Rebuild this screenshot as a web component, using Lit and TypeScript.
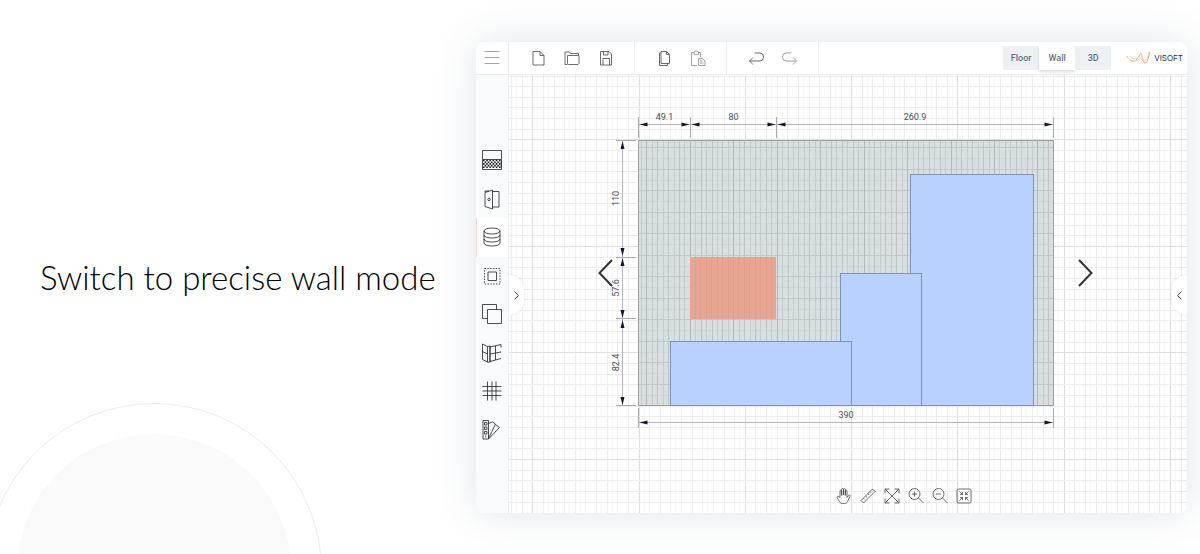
import { LitElement, html, svg, css, TemplateResult, SVGTemplateResult } from "lit";
import { customElement, property, state } from "lit/decorators.js";
import { classMap } from "lit/directives/class-map.js";

const range = (n: number) => Array.from({ length: n }, (_, i) => i);

/* All icons are drawn around the centre of a 22 x 22 box. */
const icons: Record<string, SVGTemplateResult> = {
  menu: svg`<path stroke="#8d8d8d" d="M3.5 4.5h15M3.5 10.5h15M3.5 16.5h15"/>`,
  file: svg`<path d="M6 4.500h7l4 4v9.500h-11zM13 4.500v4h4"/>`,
  folder: svg`<path d="M6.500 17.500h-2.500v-12.500h4.500l1 1.500h8v1.500M6.500 16.500v-8h11.500v8l-1 1h-9.500z"/>`,
  save: svg`<path d="M5.500 4.500h8.500l2.500 2.500v11h-11zM8.500 4.500v3.500h4.500v-3.500M8 18v-6.500h6.500v6.500"/>`,
  copy: svg`<path d="M8 4.500h5.500l3 3v9h-8.500zM13.500 4.500v3h3M8 6h-1.500v12.500h8v-2"/>`,
  paste: svg`<path d="M10 18.500h-5.500v-13h2.500M11 5.500h2.500v4.500M7 7.500v-2l1-1.500h2.500l1 1.500v2zM11.500 11.500h4l2.500 2.500v4.500h-6.500zM13 14h2.500M13 16h3.500" />`,
  undo: svg`<path d="M9.500 6h5.500a3.500 4 0 0 1 0 8h-10.500M8 10.500l-3.500 3.500 3.500 3.500"/>`,
  redo: svg`<path d="M12.500 6h-5.500a3.500 4 0 0 0 0 8h10.500M14 10.500l3.500 3.500-3.500 3.500"/>`,
  tiles: svg`<path d="M1.500 1.500h19v19h-19z"/><path stroke-width="1.600" stroke-dasharray="1.600 1.600" d="M2 11.500h18M3.600 13.200h17M2 14.900h18M3.600 16.600h17M2 18.300h18"/><path d="M2 10.500h18"/>`,
  door: svg`<path d="M4 4.500l7.500-2.500v19l-7.500-2.500zM11.500 3.500h6.500v15.500h-6.500M4 4v-1h4"/><circle cx="8" cy="11.500" r="1.200"/>`,
  stack: svg`<ellipse cx="11" cy="5" rx="8" ry="3"/><path d="M3 5v12c0 4 16 4 16 0v-12M3 9c0 4 16 4 16 0M3 13c0 4 16 4 16 0"/>`,
  frame: svg`<path stroke-dasharray="1.500 1.300" d="M3.500 3.500h15.500v15.500h-15.500z"/><path d="M7 7h8.500v8.500h-8.500z"/>`,
  overlap: svg`<path d="M6.500 15.500h-5v-14h14v5M6.500 6.500h14v14h-14z"/>`,
  wall: svg`<path d="M1.500 2l5 2.500v15.500l-5-2.500zM6.500 4.500l2.500 -.5v16l-2.500 .5M9 5l11-2.500M9 12l11-2M9 19.500l11-3M14.500 4v14M20 2.500v3M1.500 9.500l5 2.500M9 4v16"/>`,
  hash: svg`<path d="M6.500 1.500v19M11 1.500v19M15 1.500v19M1.500 6.500h19M1.500 11h19M1.500 15.500h19"/>`,
  swatches: svg`<path d="M2 1.500h5.500v18.500h-5.500zM3.500 3.500h2.500v2.500h-2.500zM3.500 8h2.500v2.500h-2.500zM3.500 12.500h2.500v2.500h-2.500zM7.500 4.500l4-1.500 3 2-7 14.500M14.500 5.500l4 3-11 11.500M4.700 16.500v2"/>`,
  hand: svg`<path d="M7 12.500v-6.500c0-1.300 1.700-1.300 1.700 0v4.500v-6c0-1.300 1.800-1.300 1.800 0v5.500v-5.500c0-1.300 1.800-1.300 1.800 0v6v-4.500c0-1.300 1.700-1.300 1.700 0v6.500l1.500-2c.8-1 2-.3 1.500.8l-2.500 5.200c-.7 1.500-1.500 2-3 2h-2c-1.500 0-2.300-.5-3-1.800l-2.300-4c-.6-1.200.6-2 1.500-1.200z"/>`,
  ruler: svg`<path d="M4 15.500l11.500-11.500 2.500 2.500-11.500 11.500zM6.500 13.200l1.200 1.200M8.700 11l1.200 1.200M10.900 8.800l1.200 1.200M13.100 6.600l1.200 1.200"/>`,
  expand: svg`<path d="M4 4l14 14M18 4l-14 14M8.500 4h-4.500v4.500M13.500 4h4.500v4.500M8.500 18h-4.500v-4.500M13.500 18h4.500v-4.500"/>`,
  zoomIn: svg`<circle cx="9.500" cy="9" r="5.500"/><path d="M13.500 13l5 5M7 9h5M9.500 6.500v5"/>`,
  zoomOut: svg`<circle cx="9.500" cy="9" r="5.500"/><path d="M13.500 13l5 5M7 9h5"/>`,
  fit: svg`<rect x="4" y="4" width="14" height="14" rx="1.500"/><path d="M6.500 6.500l3 3v-2.500M9.500 9.500h-2.500M15.500 6.500l-3 3v-2.500M12.500 9.500h2.500M6.500 15.500l3-3v2.500M9.500 12.500h-2.500M15.500 15.500l-3-3v2.500M12.500 12.500h2.500"/>`,
};

@customElement("line-icon")
class LineIcon extends LitElement {
  static styles = css`
    :host { display: block; width: 22px; height: 22px; }
    .glyph {
      display: block; width: 22px; height: 22px; fill: none;
      stroke: currentColor; stroke-width: 0.8; stroke-linejoin: round;
    }
  `;
  @property() name = "file";
  render() {
    return html`<svg class="glyph" viewBox="0 0 22 22" aria-hidden="true">${icons[this.name]}</svg>`;
  }
}

/* The wall elevation: 390 x 250 cm, drawn over a 10 cm grid. */
@customElement("wall-plan")
class WallPlan extends LitElement {
  static styles = css`
    :host { display: block; min-height: 0; }
    .plan { display: block; width: 100%; height: 100%; }
    .label { font: 9px Roboto, "Liberation Sans", sans-serif; fill: #4a4f60; text-anchor: middle; }
    .dim { stroke: #b4b6be; fill: none; }
    .tick { stroke: #a9abb0; fill: none; }
    .tip { fill: #14142c; }
    .block { fill: #b8d1ff; stroke: #7f92b5; }
    .opening { fill: #e7a592; }
    .outline { fill: none; stroke: #9aa1a4; }
  `;

  private horizontal(x1: number, x2: number, y: number, text: string) {
    const m = (x1 + x2) / 2;
    return svg`
      <path class="dim" d="M${x1} ${y}H${x2}"/>
      <path class="tip" d="M${x1 + 1} ${y}l8 -2v4zM${x2 - 1} ${y}l-8 -2v4z"/>
      <text class="label" x=${m} y=${y - 5}>${text}</text>`;
  }

  private vertical(y1: number, y2: number, x: number, text: string) {
    const m = (y1 + y2) / 2;
    return svg`
      <path class="dim" d="M${x} ${y1}V${y2}"/>
      <path class="tip" d="M${x} ${y1 + 1}l-2 8h4zM${x} ${y2 - 1}l-2 -8h4z"/>
      <text class="label" transform="translate(${x - 4} ${m}) rotate(-90)">${text}</text>`;
  }

  render() {
    return html`
      <svg class="plan" viewBox="509 75 678 438" preserveAspectRatio="xMidYMid slice" role="img" aria-label="Wall elevation">
        <rect x="0" y="0" width="1800" height="900" fill="#fff"/>
        ${range(64).map((i) => svg`<path stroke="#f9f9f9" d="M${Math.round(516 + i * 10.63)}.5 75V513"/>`)}
        ${range(64).map((i) => svg`<path stroke=${i % 10 === 2 ? "#dedede" : "#eeeeee"} d="M${Math.round(511 + i * 10.63)}.5 75V513"/>`)}
        ${range(41).map((i) => svg`<path stroke=${i % 10 === 6 ? "#dedede" : "#ececec"} d="M509 ${Math.round(75.5 + (i + 0) * 10.65)}.5H1187"/>`)}

        <rect x="638" y="140" width="416" height="266" fill="#d7dfe1"/>
        ${range(12).map((i) => svg`<path stroke="#c0c8ca" d="M638 ${Math.round(147 + i * 21.5)}.5H1054"/>`)}
        ${range(12).map((i) => svg`<path stroke="#cfd7d9" d="M638 ${Math.round(158 + i * 21.5)}.5H1054"/>`)}
        ${range(76).map((i) => svg`<path stroke=${i % 8 === 1 ? "#b2babc" : i % 2 ? "#bcc4c6" : "#c3cbcd"} d="M${Math.round(641 + i * 5.43)}.5 140V406"/>`)}
        <path class="outline" d="M638.5 140.5h415v265h-415z"/>

        <rect class="opening" x="690" y="257" width="86" height="62"/>
        ${range(15).map((i) => svg`<path stroke="#d99886" stroke-opacity=".5" d="M${Math.round(695 + i * 5.43)}.5 257V319"/>`)}
        <rect class="block" x="910.5" y="174.5" width="123" height="231"/>
        <rect class="block" x="840.5" y="273.5" width="81" height="132"/>
        <rect class="block" x="670.5" y="341.5" width="181" height="64"/>

        <path class="tick" d="M638.5 117v21M690.5 117v21M776.5 117v21M1053.5 117v21M638.5 408v20M1053.5 408v20"/>
        <path class="tick" d="M616 140.5h20M616 257.5h20M616 318.5h20M616 405.5h20"/>
        ${this.horizontal(638.5, 690.5, 124.5, "49.1")}
        ${this.horizontal(690.5, 776.5, 124.5, "80")}
        ${this.horizontal(776.5, 1053.5, 124.5, "260.9")}
        ${this.horizontal(638.5, 1053.5, 422.5, "390")}
        ${this.vertical(140, 257, 622.5, "110")}
        ${this.vertical(257, 319, 622.5, "57.6")}
        ${this.vertical(319, 406, 622.5, "82.4")}
      </svg>`;
  }
}

const button = css`
  button {
    display: grid; place-items: center; margin: 0; padding: 0; border: 0;
    background: none; color: #484848; font: 9px Roboto, "Liberation Sans", sans-serif; cursor: pointer;
  }
`;

@customElement("app-root")
class AppRoot extends LitElement {
  static styles = [
    button,
    css`
      :host { display: block; }
      .page {
        display: grid; grid-template-columns: minmax(0, 476fr) minmax(0, 711fr); min-height: 100vh;
        box-sizing: border-box; padding-right: 13px; background: #fff; overflow: hidden;
        font-family: Roboto, "Liberation Sans", sans-serif;
      }
      .intro { position: relative; display: grid; align-items: center; padding-left: 40px; }
      .headline { margin: 0; font: 300 33px/40px Lato, "Open Sans", sans-serif; color: #000; white-space: nowrap; z-index: 1; }
      .halo {
        position: absolute; left: -14px; top: calc(100% - 151px); width: 334px; height: 334px;
        display: grid; place-items: center; border: 1px solid #ececec; border-radius: 50%;
      }
      .disc { width: 274px; height: 274px; border-radius: 50%; background: #fafafa; }

      .window {
        display: grid; grid-template-rows: 33px minmax(0, 1fr); margin: 42px 0 41px;
        border-radius: 8px; background: #fff; box-shadow: 0 0 40px rgba(70, 90, 110, 0.16); z-index: 1; min-height: 0;
      }
      .bar { display: flex; border-bottom: 1px solid #ececec; }
      .menu { width: 33px; border-right: 1px solid #ececec; }
      .group { display: flex; padding: 0 11px 0 12px; border-right: 1px solid #f0f0f0; }
      .tool { width: 34px; }
      .faded { color: #8a8a8a; }
      .modes { display: flex; margin: 4px 15px 4px auto; }
      .mode { width: 36px; background: #edf1f3; color: #647080; font-weight: 500; }
      .active { background: #fff; box-shadow: 0 2px 3px rgba(60, 80, 100, 0.2); }
      .brand { display: flex; align-items: center; gap: 2px; margin-right: 4px; font: 8px Inter, "Open Sans", sans-serif; color: #333; text-decoration: none; }
      .mark { width: 26px; height: 16px; fill: none; }

      .body { display: grid; grid-template-columns: 33px minmax(0, 1fr); min-height: 0; }
      .side {
        display: grid; grid-auto-rows: 1fr; padding: 66px 0 64px; background: #f8fafc;
        border-right: 1px solid #eceef1; border-radius: 0 0 0 8px;
      }
      .item { color: #222; border-left: 1px solid transparent; padding-right: 1px; }
      .chosen { background: #fff; border-left-color: #f6d5d0; }

      .canvas { position: relative; display: grid; grid-template-rows: minmax(0, 1fr); min-height: 0; overflow: hidden; border-radius: 0 0 8px 0; }
      .arrow { position: absolute; top: 184px; width: 15px; height: 28px; color: #333; }
      .prev { left: 89px; }
      .next { right: 94px; }
      .drawer { position: absolute; top: 200px; width: 15px; height: 40px; background: #fff; box-shadow: 0 0 3px rgba(60, 80, 100, 0.14); }
      .open-left { left: 0; border-radius: 0 20px 20px 0; }
      .open-right { right: 0; border-radius: 20px 0 0 20px; }
      .stroke { display: block; fill: none; stroke: currentColor; }
      .view { position: absolute; left: 47.6%; bottom: 6px; display: flex; }
      .view-tool { width: 24px; height: 22px; }
    `,
  ];

  @state() private mode = "Wall";
  @state() private item = "stack";

  private tool(name: string, label: string, faded = false): TemplateResult {
    return html`<button class=${classMap({ tool: true, faded })} aria-label=${label}><line-icon name=${name}></line-icon></button>`;
  }

  render() {
    const side = [
      ["tiles", "Tiles"], ["door", "Doors"], ["stack", "Library"], ["frame", "Select"],
      ["overlap", "Areas"], ["wall", "Walls"], ["hash", "Grid"], ["swatches", "Colours"],
    ];
    const view = [
      ["hand", "Pan"], ["ruler", "Measure"], ["expand", "Extents"],
      ["zoomIn", "Zoom in"], ["zoomOut", "Zoom out"], ["fit", "Fit"],
    ];
    return html`
      <main class="page">
        <section class="intro">
          <div class="halo"><div class="disc"></div></div>
          <h1 class="headline">Switch to precise wall mode</h1>
        </section>
        <section class="window">
          <header class="bar">
            <button class="menu" aria-label="Menu"><line-icon name="menu"></line-icon></button>
            <div class="group">
              ${this.tool("file", "New")}${this.tool("folder", "Open")}${this.tool("save", "Save")}
            </div>
            <div class="group">${this.tool("copy", "Copy")}${this.tool("paste", "Paste", true)}</div>
            <div class="group">${this.tool("undo", "Undo")}${this.tool("redo", "Redo", true)}</div>
            <nav class="modes">
              ${["Floor", "Wall", "3D"].map((m) => html`
                <button class=${classMap({ mode: true, active: m === this.mode })} @click=${() => (this.mode = m)}>${m}</button>`)}
            </nav>
            <a class="brand" href="#">
              <svg class="mark" viewBox="0 0 26 16" aria-hidden="true">
                <path stroke="#f0b07c" d="M1 6c2 5 7 7 10 3l4-6 3 10 3-1 3-10"/>
                <path stroke="#f7d3b3" d="M2 8c3 4 8 4 11 1s2 2 5 2 4-6 5-9M4 6c4 5 9 3 11-3l4 11"/>
              </svg>
              VISOFT
            </a>
          </header>
          <div class="body">
            <nav class="side">
              ${side.map(([n, l]) => html`
                <button class=${classMap({ item: true, chosen: n === this.item })} aria-label=${l} @click=${() => (this.item = n)}>
                  <line-icon name=${n}></line-icon>
                </button>`)}
            </nav>
            <div class="canvas">
              <wall-plan></wall-plan>
              <button class="arrow prev" aria-label="Previous wall">
                <svg class="stroke" width="15" height="28" stroke-width="2"><path d="M14 1L1.500 14L14 27"/></svg>
              </button>
              <button class="arrow next" aria-label="Next wall">
                <svg class="stroke" width="15" height="28" stroke-width="2"><path d="M1 1L13.500 14L1 27"/></svg>
              </button>
              <button class="drawer open-left" aria-label="Open left panel">
                <svg class="stroke" width="5" height="9"><path d="M0.500 0.500L4.500 4.500L0.500 8.500"/></svg>
              </button>
              <button class="drawer open-right" aria-label="Open right panel">
                <svg class="stroke" width="5" height="9"><path d="M4.500 0.500L0.500 4.500L4.500 8.500"/></svg>
              </button>
              <div class="view">
                ${view.map(([n, l]) => html`<button class="view-tool" aria-label=${l}><line-icon name=${n}></line-icon></button>`)}
              </div>
            </div>
          </div>
        </section>
      </main>`;
  }
}
